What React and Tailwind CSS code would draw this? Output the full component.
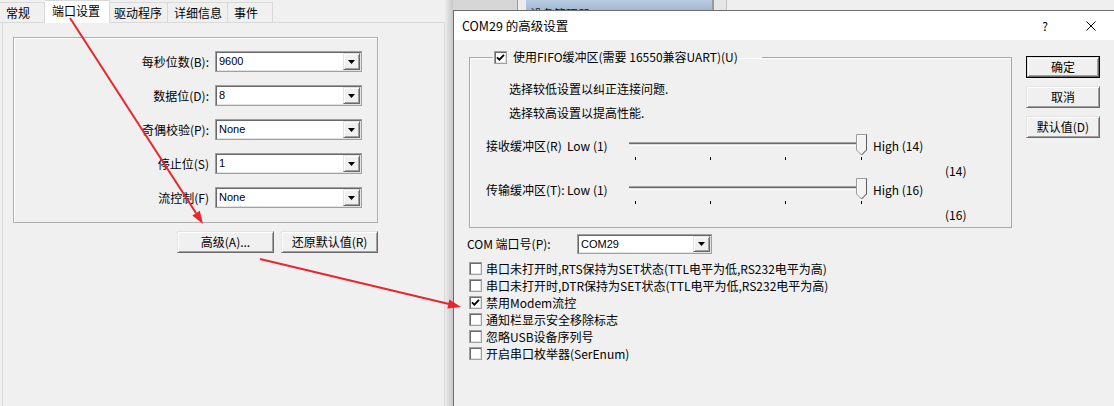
import React from "react";

function Raised({ className = "", children }) {
  return (
    <div
      className={
        "flex items-center justify-center bg-[#f0f0f0] border border-t-[#e3e3e3] border-l-[#e3e3e3] border-r-[#696969] border-b-[#696969] shadow-[inset_1px_1px_0_#ffffff,inset_-1px_-1px_0_#a0a0a0] " +
        className
      }
    >
      {children}
    </div>
  );
}

function Combo({ value, className = "" }) {
  return (
    <div
      className={
        "flex shrink-0 bg-white border border-[#a0a0a0] p-px shadow-[inset_1px_1px_0_#696969,inset_-1px_-1px_0_#e3e3e3] " +
        className
      }
    >
      <div className="flex-1 flex items-center pl-[2px] font-['Liberation_Sans',sans-serif] text-[11px] leading-none">
        {value}
      </div>
      <Raised className="w-[17px] h-full">
        <svg width="7" height="4" viewBox="0 0 7 4">
          <path d="M0 0H7L3.5 4Z" fill="#000" />
        </svg>
      </Raised>
    </div>
  );
}

function Check({ checked }) {
  return (
    <div className="w-[13px] h-[13px] shrink-0 bg-white border border-[#a0a0a0] shadow-[inset_1px_1px_0_#696969,inset_-1px_-1px_0_#e3e3e3] flex items-center justify-center">
      {checked && (
        <svg width="11" height="11" viewBox="0 0 11 11">
          <path d="M2 5.3 L4.4 7.7 L9 2.8" fill="none" stroke="#000" strokeWidth="1.8" />
        </svg>
      )}
    </div>
  );
}

function Slider() {
  return (
    <svg width="244" height="28" viewBox="0 0 244 28" className="shrink-0">
      <rect x="4" y="9" width="229" height="1" fill="#a0a0a0" />
      <rect x="4" y="10" width="229" height="1" fill="#6d6d6d" />
      <rect x="4" y="11" width="229" height="1" fill="#dcdcdc" />
      <rect x="4" y="12" width="229" height="1" fill="#ffffff" />
      <path d="M231.5 1.5 H241.5 V17 L236.5 22 L231.5 17 Z" fill="#f2f2f2" stroke="#9a9a9a" />
      <path d="M241.5 1.5 V17 L236.5 22" fill="none" stroke="#5e5e5e" />
      <path d="M232.5 16.5 V2.5 H240.5" fill="none" stroke="#ffffff" />
      <rect x="10" y="24" width="1" height="3" fill="#000" />
      <rect x="85" y="24" width="1" height="3" fill="#000" />
      <rect x="160" y="24" width="1" height="3" fill="#000" />
      <rect x="236" y="24" width="1" height="3" fill="#000" />
    </svg>
  );
}

function FormRow({ label, value }) {
  return (
    <div className="flex items-center h-[21px]">
      <div className="w-[195px] text-right leading-[16px] whitespace-nowrap">{label}</div>
      <Combo value={value} className="ml-[6px] w-[147px] h-[21px]" />
    </div>
  );
}

function SliderBlock({ label, high, value }) {
  return (
    <div className="flex flex-col">
      <div className="flex items-start h-[28px] pl-[16px]">
        <div className="w-[81px] mt-[4px] leading-[18px] whitespace-nowrap">{label}</div>
        <div className="w-[58px] mt-[4px] leading-[18px] whitespace-nowrap">Low (1)</div>
        <Slider />
        <div className="ml-[4px] mt-[4px] leading-[18px] whitespace-nowrap">{high}</div>
      </div>
      <div className="mt-[4px] h-[12px] leading-[12px] pl-[475px]">{value}</div>
    </div>
  );
}

const checks = [
  ["串口未打开时,RTS保持为SET状态(TTL电平为低,RS232电平为高)", false],
  ["串口未打开时,DTR保持为SET状态(TTL电平为低,RS232电平为高)", false],
  ["禁用Modem流控", true],
  ["通知栏显示安全移除标志", false],
  ["忽略USB设备序列号", false],
  ["开启串口枚举器(SerEnum)", false],
];

export default function App() {
  return (
    <div className="relative w-[1114px] h-[406px] overflow-hidden bg-[#f0f0f0] flex text-[12px] text-black font-['Noto_Sans_CJK_SC','Liberation_Sans',sans-serif]">
      {/* Left property sheet */}
      <div className="w-[445px] shrink-0 flex flex-col">
        <div className="h-[23px] flex items-end shrink-0">
          <div className="w-[45px] h-[21px] flex items-center pl-[6px] border-t border-r border-b border-[#d9d9d9] leading-[16px]">
            常规
          </div>
          <div className="w-[65px] h-[23px] flex items-center pl-[7px] pb-[3px] bg-white border-t border-r border-[#d9d9d9] leading-[16px]">
            端口设置
          </div>
          <div className="w-[58px] h-[21px] flex items-center pl-[4px] border-t border-r border-b border-[#d9d9d9] leading-[16px]">
            驱动程序
          </div>
          <div className="w-[60px] h-[21px] flex items-center pl-[6px] border-t border-r border-b border-[#d9d9d9] leading-[16px]">
            详细信息
          </div>
          <div className="w-[45px] h-[21px] flex items-center pl-[6px] border-t border-r border-b border-[#d9d9d9] leading-[16px]">
            事件
          </div>
          <div className="flex-1 h-full border-b border-[#d9d9d9]" />
        </div>
        <div className="flex-1 ml-[2px] border-l border-r border-[#d9d9d9] pl-[10px] pt-[14px]">
          <div className="w-[365px] h-[186px] border border-[#b0b0b0] shadow-[inset_1px_1px_0_#ffffff] pt-[13px] flex flex-col gap-[13px]">
            <FormRow label="每秒位数(B):" value="9600" />
            <FormRow label="数据位(D):" value="8" />
            <FormRow label="奇偶校验(P):" value="None" />
            <FormRow label="停止位(S)" value="1" />
            <FormRow label="流控制(F)" value="None" />
          </div>
          <div className="w-[365px] mt-[8px] flex justify-end gap-[7px]">
            <Raised className="w-[97px] h-[22px] leading-[16px]">高级(A)...</Raised>
            <Raised className="w-[97px] h-[22px] leading-[16px]">还原默认值(R)</Raised>
          </div>
        </div>
      </div>

      {/* shadow strip */}
      <div className="w-[8px] shrink-0 bg-linear-to-r from-[#ececec] to-[#c8c8c8]" />

      {/* Right column: window behind + dialog */}
      <div className="flex-1 min-w-0 flex flex-col">
        <div className="h-[10px] flex shrink-0 overflow-hidden">
          <div className="w-[64px] bg-[#d6d6d6]" />
          <div className="w-px bg-[#9c9c9c]" />
          <div className="w-[8px] bg-[#ececec]" />
          <div className="w-[186px] h-[10px] bg-linear-to-b from-[#b8cbe2] to-[#a3b8d2] overflow-hidden">
            <div className="pl-[4px] pt-[7px] text-[12px] leading-[14px] text-[#1e1e1e] whitespace-nowrap">设备管理器</div>
          </div>
          <div className="w-[2px] bg-[#9a9a9a]" />
          <div className="w-[12px] bg-[#e6e6e6]" />
          <div className="w-px bg-[#c4c4c4]" />
          <div className="flex-1 bg-[#efefef]" />
        </div>

        <div className="flex-1 flex flex-col border-l border-t border-[#6e6e6e] bg-[#f0f0f0]">
          <div className="h-[29px] shrink-0 bg-white flex items-center pl-[8px] pr-[18px]">
            <span className="leading-[16px] text-[12.5px]">COM29 的高级设置</span>
            <span className="ml-auto leading-[16px]">?</span>
            <svg width="10" height="10" viewBox="0 0 10 10" className="ml-[38px]">
              <path d="M0.5 0.5 L9.5 9.5 M9.5 0.5 L0.5 9.5" stroke="#000" strokeWidth="1" fill="none" />
            </svg>
          </div>

          <div className="flex pl-[13px] pt-[9px]">
            <div className="w-[545px] shrink-0 flex flex-col">
              <fieldset className="ml-[2px] w-[543px] border border-[#a8a8a8] shadow-[inset_1px_1px_0_#ffffff] pb-[6px]">
                <legend className="ml-[23px] w-[269px] h-[16px] pl-[1px] flex items-center">
                  <Check checked />
                  <span className="ml-[6px] leading-[16px] whitespace-nowrap">使用FIFO缓冲区(需要 16550兼容UART)(U)</span>
                </legend>
                <div className="mt-[15px] pl-[39px] leading-[18px] h-[18px]">选择较低设置以纠正连接问题.</div>
                <div className="mt-[6px] pl-[39px] leading-[18px] h-[18px]">选择较高设置以提高性能.</div>
                <div className="mt-[11px] flex flex-col">
                  <SliderBlock label="接收缓冲区(R)" high="High (14)" value="(14)" />
                  <SliderBlock label="传输缓冲区(T):" high="High (16)" value="(16)" />
                </div>
              </fieldset>

              <div className="mt-[6px] h-[20px] flex items-center">
                <div className="w-[110px] leading-[16px]">COM 端口号(P):</div>
                <Combo value="COM29" className="w-[135px] h-[20px]" />
              </div>

              <div className="mt-[6px] flex flex-col ml-[2px]">
                {checks.map(([t, c]) => (
                  <div key={t} className="h-[17px] flex items-center">
                    <Check checked={c} />
                    <span className="ml-[4px] leading-[16px] whitespace-nowrap">{t}</span>
                  </div>
                ))}
              </div>
            </div>

            <div className="ml-[14px] mt-[7px] w-[74px] shrink-0 flex flex-col gap-[8px]">
              <div className="border border-[#000]">
                <Raised className="w-[72px] h-[20px] leading-[16px]">确定</Raised>
              </div>
              <Raised className="w-[74px] h-[22px] leading-[16px]">取消</Raised>
              <Raised className="w-[74px] h-[22px] leading-[16px]">默认值(D)</Raised>
            </div>
          </div>
        </div>
      </div>

      {/* red annotation arrows */}
      <svg className="absolute left-0 top-0 pointer-events-none" width="1114" height="406" viewBox="0 0 1114 406">
        <line x1="70" y1="18" x2="196" y2="213" stroke="#e8262b" strokeWidth="2" />
        <polygon points="203,224 192.3,215.5 199.8,210.7" fill="#e8262b" />
        <line x1="260" y1="259" x2="449" y2="304" stroke="#e8262b" strokeWidth="2" />
        <polygon points="461,307 447.3,308.4 449.4,299.6" fill="#e8262b" />
      </svg>
    </div>
  );
}
